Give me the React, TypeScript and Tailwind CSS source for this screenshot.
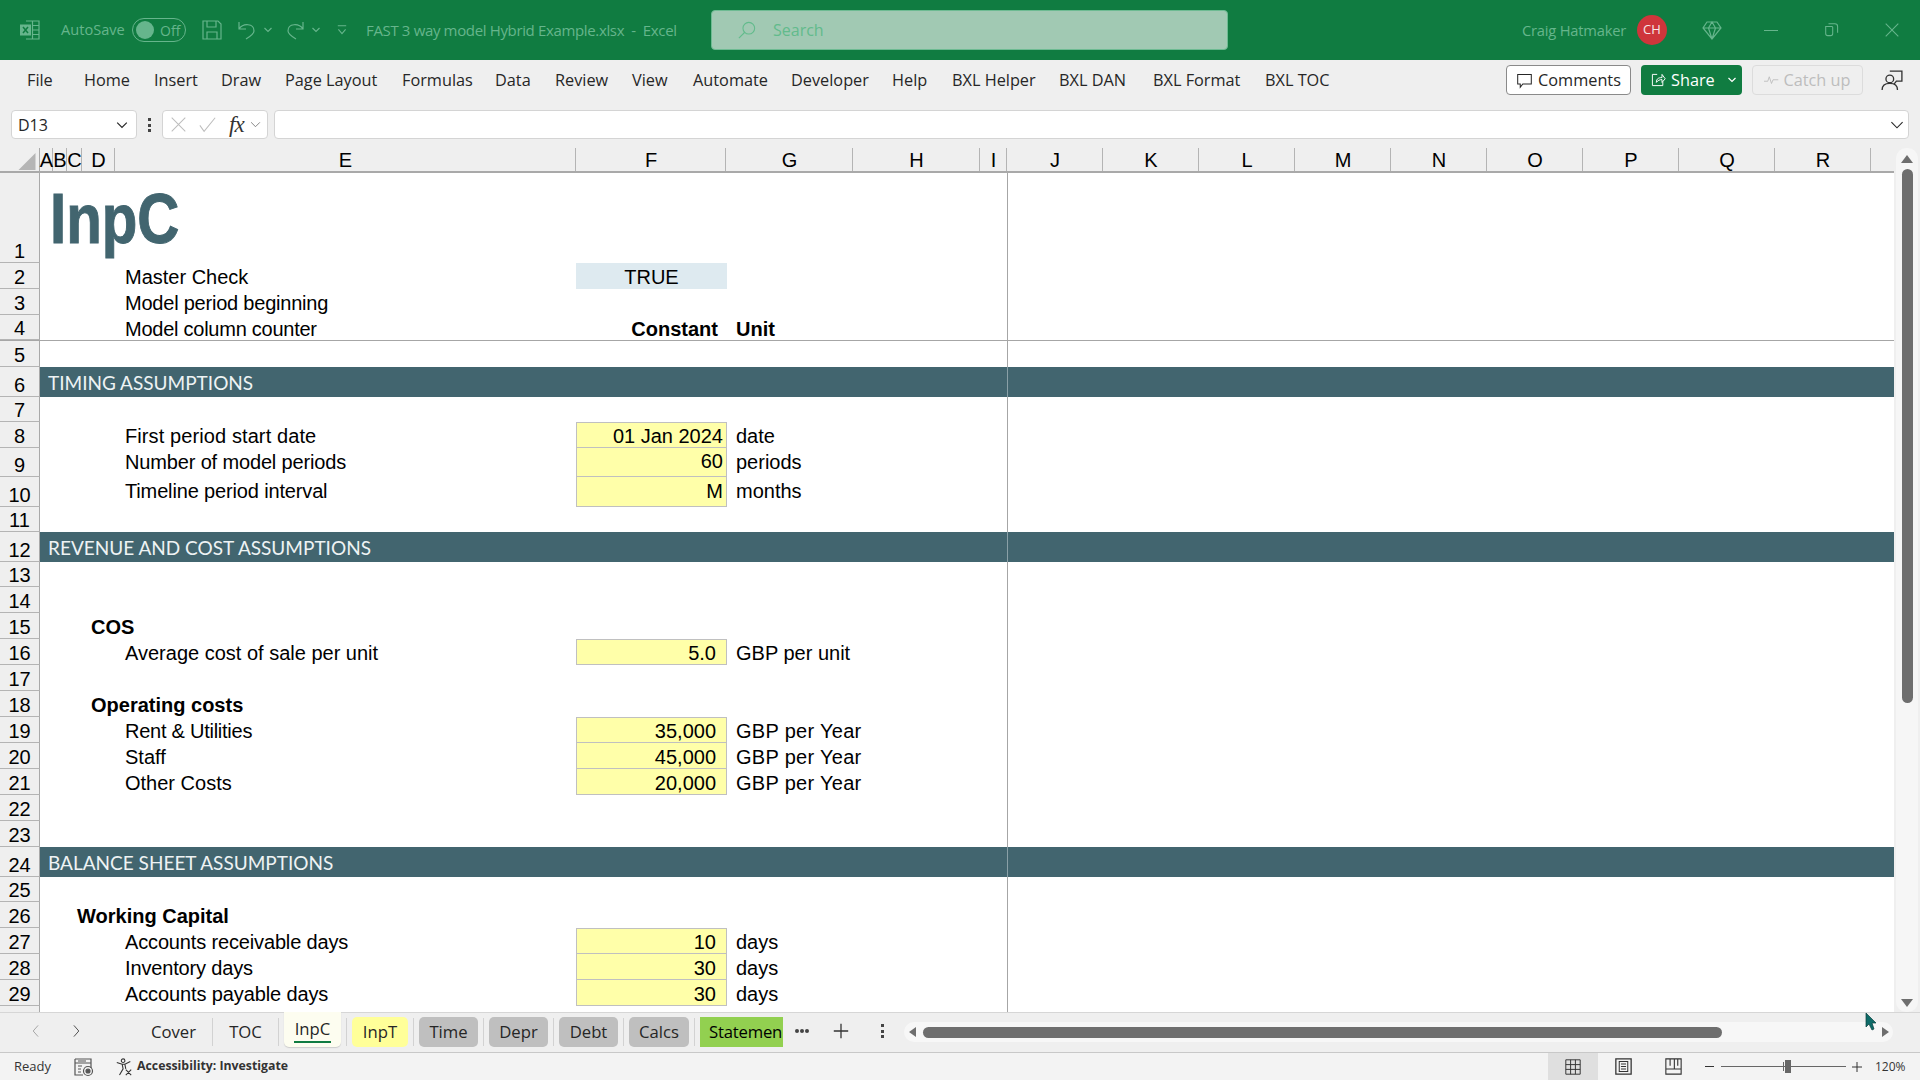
import type { ReactNode } from 'react'

type SheetRow = {
  n: number
  h: string
  label?: string
  indent?: string
  track?: string
  bold?: boolean
  value?: string
  unit?: string
  unitTrack?: string
  kind?: 'input' | 'acct' | 'check' | 'head'
  first?: boolean
  tall?: boolean
  band?: string
  line?: boolean
}

const ribbonTabs = [
  { name: 'File', w: 'w-[57px]' },
  { name: 'Home', w: 'w-[70px]' },
  { name: 'Insert', w: 'w-[67px]' },
  { name: 'Draw', w: 'w-[64px]' },
  { name: 'Page Layout', w: 'w-[117px]' },
  { name: 'Formulas', w: 'w-[93px]' },
  { name: 'Data', w: 'w-[60px]' },
  { name: 'Review', w: 'w-[77px]' },
  { name: 'View', w: 'w-[61px]' },
  { name: 'Automate', w: 'w-[98px]' },
  { name: 'Developer', w: 'w-[101px]' },
  { name: 'Help', w: 'w-[60px]' },
  { name: 'BXL Helper', w: 'w-[107px]' },
  { name: 'BXL DAN', w: 'w-[94px]' },
  { name: 'BXL Format', w: 'w-[112px]' },
  { name: 'BXL TOC', w: 'w-[90px]' },
]

const columns = [
  { name: 'A', w: 'w-[13px]' },
  { name: 'B', w: 'w-[14px]' },
  { name: 'C', w: 'w-[15px]' },
  { name: 'D', w: 'w-[33px]' },
  { name: 'E', w: 'w-[461px]' },
  { name: 'F', w: 'w-[150px]' },
  { name: 'G', w: 'w-[127px]' },
  { name: 'H', w: 'w-[127px]' },
  { name: 'I', w: 'w-[27px]' },
  { name: 'J', w: 'w-[96px]' },
  { name: 'K', w: 'w-[96px]' },
  { name: 'L', w: 'w-[96px]' },
  { name: 'M', w: 'w-[96px]' },
  { name: 'N', w: 'w-[96px]' },
  { name: 'O', w: 'w-[96px]' },
  { name: 'P', w: 'w-[96px]' },
  { name: 'Q', w: 'w-[96px]' },
  { name: 'R', w: 'w-[96px]' },
]

const E = 'pl-[85px]'
const D = 'pl-[51px]'
const C = 'pl-[37px]'
const YEAR = 'tracking-[0.3px]'

const rows: SheetRow[] = [
  { n: 1, h: 'h-[90px]' },
  { n: 2, h: 'h-[26px]', label: 'Master Check', indent: E, value: 'TRUE', kind: 'check' },
  { n: 3, h: 'h-[26px]', label: 'Model period beginning', indent: E, track: 'tracking-[-0.22px]' },
  { n: 4, h: 'h-[26px]', label: 'Model column counter', indent: E, track: 'tracking-[-0.25px]', value: 'Constant', kind: 'head', unit: 'Unit', line: true },
  { n: 5, h: 'h-[26px]' },
  { n: 6, h: 'h-[30px]', band: 'TIMING ASSUMPTIONS' },
  { n: 7, h: 'h-[25px]' },
  { n: 8, h: 'h-[26px]', label: 'First period start date', indent: E, track: 'tracking-[0.1px]', value: '01 Jan 2024', kind: 'input', unit: 'date', first: true },
  { n: 9, h: 'h-[29px]', label: 'Number of model periods', indent: E, track: 'tracking-[-0.15px]', value: '60', kind: 'input', unit: 'periods', tall: true },
  { n: 10, h: 'h-[30px]', label: 'Timeline period interval', indent: E, track: 'tracking-[-0.15px]', value: 'M', kind: 'input', unit: 'months', tall: true },
  { n: 11, h: 'h-[25px]' },
  { n: 12, h: 'h-[30px]', band: 'REVENUE AND COST ASSUMPTIONS' },
  { n: 13, h: 'h-[25px]' },
  { n: 14, h: 'h-[26px]' },
  { n: 15, h: 'h-[26px]', label: 'COS', indent: D, bold: true },
  { n: 16, h: 'h-[26px]', label: 'Average cost of sale per unit', indent: E, value: '5.0', kind: 'acct', unit: 'GBP per unit', first: true },
  { n: 17, h: 'h-[26px]' },
  { n: 18, h: 'h-[26px]', label: 'Operating costs', indent: D, bold: true },
  { n: 19, h: 'h-[26px]', label: 'Rent & Utilities', indent: E, track: 'tracking-[-0.25px]', value: '35,000', kind: 'acct', unit: 'GBP per Year', unitTrack: YEAR, first: true },
  { n: 20, h: 'h-[26px]', label: 'Staff', indent: E, value: '45,000', kind: 'acct', unit: 'GBP per Year', unitTrack: YEAR },
  { n: 21, h: 'h-[26px]', label: 'Other Costs', indent: E, value: '20,000', kind: 'acct', unit: 'GBP per Year', unitTrack: YEAR },
  { n: 22, h: 'h-[26px]' },
  { n: 23, h: 'h-[26px]' },
  { n: 24, h: 'h-[30px]', band: 'BALANCE SHEET ASSUMPTIONS' },
  { n: 25, h: 'h-[25px]' },
  { n: 26, h: 'h-[26px]', label: 'Working Capital', indent: C, bold: true },
  { n: 27, h: 'h-[26px]', label: 'Accounts receivable days', indent: E, track: 'tracking-[-0.15px]', value: '10', kind: 'acct', unit: 'days', first: true },
  { n: 28, h: 'h-[26px]', label: 'Inventory days', indent: E, track: 'tracking-[-0.15px]', value: '30', kind: 'acct', unit: 'days' },
  { n: 29, h: 'h-[26px]', label: 'Accounts payable days', indent: E, track: 'tracking-[-0.12px]', value: '30', kind: 'acct', unit: 'days' },
]

const sheetTabs = [
  { name: 'Cover', cls: 'w-[67px]' },
  { name: 'TOC', cls: 'w-[55px]' },
  { name: 'InpC', cls: 'w-[57px]', active: true },
  { name: 'InpT', cls: 'w-[56px] bg-[#ffff99] rounded-[5px]' },
  { name: 'Time', cls: 'w-[59px] bg-[#bfbfbf] rounded-[5px]' },
  { name: 'Depr', cls: 'w-[59px] bg-[#bfbfbf] rounded-[5px]' },
  { name: 'Debt', cls: 'w-[59px] bg-[#bfbfbf] rounded-[5px]' },
  { name: 'Calcs', cls: 'w-[60px] bg-[#bfbfbf] rounded-[5px]' },
]

function Icon({ className, children, fill = 'none' }: { className: string; children: ReactNode; fill?: string }) {
  return (
    <svg viewBox="0 0 20 20" fill={fill} stroke="currentColor" strokeWidth="1.2" className={className}>
      {children}
    </svg>
  )
}

function TitleBar() {
  return (
    <div className="flex h-[60px] shrink-0 items-center bg-[#107c41] text-[16px] text-[#66b58c]">
      <Icon className="ml-[20px] h-[20px] w-[20px]">
        <path d="M6 1h13v18H6M12.5 1v18M12.5 5.5H19M12.5 10H19M12.5 14.5H19" />
        <rect x="0" y="4.5" width="11" height="11" fill="currentColor" stroke="none" />
        <path d="M3 7l5 6M8 7l-5 6" stroke="#107c41" strokeWidth="1.5" />
      </Icon>
      <span className="ml-[21px] w-[71px] whitespace-nowrap text-[14.6px]">AutoSave</span>
      <div className="flex h-[24px] w-[54px] items-center rounded-full border border-[#66b58c]">
        <span className="ml-[3px] h-[18px] w-[18px] rounded-full bg-[#66b58c]" />
        <span className="ml-[6px] text-[14px]">Off</span>
      </div>
      <Icon className="ml-[16px] h-[20px] w-[20px]">
        <path d="M1 1h15l3 3v15H1zM5 1v6h9V1M5 19v-7h10v7" />
      </Icon>
      <Icon className="ml-[15px] h-[20px] w-[20px]">
        <path d="M2 2v7h7M2 9c4-6 15-6 15 2 0 3-3 5-8 8" />
      </Icon>
      <Icon className="ml-[6px] h-[10px] w-[10px]">
        <path d="M3 6l7 7 7-7" strokeWidth="2.4" />
      </Icon>
      <Icon className="ml-[12px] h-[20px] w-[20px]">
        <path d="M18 2v7h-7M18 9C14 3 3 3 3 11c0 3 3 5 8 8" />
      </Icon>
      <Icon className="ml-[6px] h-[10px] w-[10px]">
        <path d="M3 6l7 7 7-7" strokeWidth="2.4" />
      </Icon>
      <Icon className="ml-[15px] h-[12px] w-[12px]">
        <path d="M3 3h14M4 9l6 7 6-7" strokeWidth="1.8" />
      </Icon>
      <span className="ml-[18px] w-[345px] whitespace-nowrap text-[15px] tracking-[-0.35px]">FAST 3 way model Hybrid Example.xlsx{'\u00a0\u00a0-\u00a0\u00a0'}Excel</span>
      <div className="flex h-[40px] w-[517px] items-center rounded-[4px] border border-[#6dbb92] bg-[#a1c9b3] text-[#62bb8c]">
        <Icon className="ml-[26px] h-[18px] w-[18px]">
          <circle cx="12" cy="8" r="6.5" />
          <path d="M7.5 12.5L1 19" />
        </Icon>
        <span className="ml-[17px]">Search</span>
      </div>
      <span className="ml-[294px] w-[104px] whitespace-nowrap text-[14.7px] tracking-[-0.2px]">Craig Hatmaker</span>
      <div className="ml-[11px] flex h-[30px] w-[30px] items-center justify-center rounded-full bg-[#cf353b] text-[13px] text-[#f6e7e7]">CH</div>
      <Icon className="ml-[35px] h-[20px] w-[20px]">
        <path d="M5 2h10l4 6-9 11L1 8zM1 8h18M6.5 8L10 19l3.5-11L10 2 6.5 8" />
      </Icon>
      <span className="ml-[42px] h-px w-[14px] bg-current" />
      <Icon className="ml-[47px] h-[14px] w-[14px]">
        <path d="M1 5h9a1.5 1.5 0 011 1v9a3 3 0 01-3 3H4a3 3 0 01-3-3zM5 1h9a4 4 0 014 4v9" strokeWidth="1.5" />
      </Icon>
      <Icon className="ml-[46px] h-[14px] w-[14px]">
        <path d="M1 1l18 18M19 1L1 19" strokeWidth="1.5" />
      </Icon>
    </div>
  )
}

function Ribbon() {
  return (
    <div className="flex h-[45px] shrink-0 items-center pb-[5px] text-[16.3px] text-[#262626]">
      <div className="flex pl-[27px]">
        {ribbonTabs.map(t => (
          <span key={t.name} className={`${t.w} whitespace-nowrap`}>{t.name}</span>
        ))}
      </div>
      <div className="ml-[151px] flex h-[30px] w-[125px] items-center justify-center gap-[5px] rounded-[4px] border border-[#8a8a8a] bg-white">
        <Icon className="h-[17px] w-[17px]">
          <path d="M2 3h16v11H8l-3 4v-4H2z" />
        </Icon>
        <span>Comments</span>
      </div>
      <div className="ml-[10px] flex h-[30px] w-[101px] items-center rounded-[4px] bg-[#107c41] text-white">
        <Icon className="ml-[9px] h-[16px] w-[16px]">
          <path d="M9 3H3v14h13v-5M8 13c0-5 3-6 7-6V3l4 5.500-4 4.500V9.500c-3 0-5 1-7 3.500z" />
        </Icon>
        <span className="ml-[5px]">Share</span>
        <Icon className="ml-[12px] h-[10px] w-[10px]">
          <path d="M3 6l7 7 7-7" strokeWidth="2.4" />
        </Icon>
      </div>
      <div className="ml-[10px] flex h-[30px] w-[111px] items-center justify-center gap-[4px] rounded-[4px] border border-[#dcdcdc] text-[#bdbdbd]">
        <Icon className="h-[15px] w-[15px]">
          <path d="M0 11h5l2-6 3 9 2-5h7" />
        </Icon>
        <span>Catch up</span>
      </div>
      <Icon className="ml-[18px] h-[22px] w-[22px] text-[#333]">
        <circle cx="8" cy="9" r="3.500" />
        <path d="M1 19c0-4 3-6 7-6s7 2 7 6M8 2h11v9h-5l-2 2.500" />
      </Icon>
    </div>
  )
}

function FormulaBar() {
  return (
    <div className="flex h-[43px] shrink-0 items-start pt-[5px] text-[#262626]">
      <div className="ml-[11px] flex h-[29px] w-[126px] items-center justify-between rounded-[4px] border border-[#d4d4d4] bg-white pl-[6px] pr-[8px] text-[16px]">
        <span>D13</span>
        <Icon className="h-[12px] w-[12px]">
          <path d="M2 6l8 8 8-8" strokeWidth="2" />
        </Icon>
      </div>
      <div className="ml-[11px] mt-[8px] flex h-[14px] w-[4px] flex-col justify-between">
        <span className="h-[3px] w-[3px] bg-[#444]" />
        <span className="h-[3px] w-[3px] bg-[#444]" />
        <span className="h-[3px] w-[3px] bg-[#444]" />
      </div>
      <div className="ml-[10px] flex h-[29px] w-[106px] items-center rounded-[4px] border border-[#d4d4d4] bg-white">
        <Icon className="ml-[7px] h-[17px] w-[17px] text-[#bdbdbd]">
          <path d="M2 2l16 16M18 2L2 18" />
        </Icon>
        <Icon className="ml-[12px] h-[17px] w-[17px] text-[#bdbdbd]">
          <path d="M1 11l5 7L19 2" />
        </Icon>
        <span className="ml-[13px] font-['Liberation_Serif',serif] text-[23px] italic leading-none tracking-[-1px] text-[#333]">fx</span>
        <Icon className="ml-[6px] h-[11px] w-[11px] text-[#777]">
          <path d="M2 6l8 8 8-8" strokeWidth="1.6" />
        </Icon>
      </div>
      <div className="ml-[6px] flex h-[29px] w-[1635px] items-center justify-end rounded-[4px] border border-[#d4d4d4] bg-white pr-[4px]">
        <Icon className="h-[14px] w-[14px]">
          <path d="M2 6l8 8 8-8" strokeWidth="1.6" />
        </Icon>
      </div>
    </div>
  )
}

function ColumnHeader() {
  return (
    <div className="flex h-[25px] shrink-0 border-b-2 border-[#a9a9a9] text-[20px] text-black">
      <div className="flex w-[40px] items-end justify-end border-r border-[#a9a9a9] pb-[1px] pr-[3px]">
        <svg viewBox="0 0 18 18" className="h-[17px] w-[18px]">
          <polygon points="18,0 18,18 0,18" fill="#b5b5b5" />
        </svg>
      </div>
      {columns.map(c => (
        <div key={c.name} className={`${c.w} flex shrink-0 items-center justify-center border-r border-[#b4b4b4] pl-[1px] leading-none`}>
          {c.name}
        </div>
      ))}
    </div>
  )
}

function ValueCell({ row, nudge }: { row: SheetRow; nudge: string }) {
  const base = `flex w-[151px] shrink-0 items-center ${nudge}`
  if (row.kind === 'check') {
    return <div className={`${base} justify-center bg-[#deeaf0]`}>{row.value}</div>
  }
  if (row.kind === 'head') {
    return <div className={`${base} justify-end pr-[9px] font-bold`}>{row.value}</div>
  }
  if (row.kind === 'input' || row.kind === 'acct') {
    return (
      <div className={`${base} justify-end border-x border-b border-[#c0c0c0] bg-[#ffffa9] ${row.first ? 'border-t' : ''} ${row.kind === 'acct' ? 'pr-[10px]' : 'pr-[3px]'}`}>
        {row.value}
      </div>
    )
  }
  return <div className="w-[151px] shrink-0" />
}

function Row({ row }: { row: SheetRow }) {
  const nudge = row.tall ? 'pb-[2px]' : 'pt-[2px]'
  return (
    <div className={`${row.h} flex shrink-0 text-[20px] leading-[24px] text-black ${row.line ? 'border-b border-[#a6a6a6]' : ''}`}>
      <div className="flex w-[40px] shrink-0 items-end justify-center border-r border-b border-r-[#a9a9a9] border-b-[#b4b4b4] bg-[#efefef] leading-[22px]">
        {row.n}
      </div>
      {row.band ? (
        <>
          <div className="flex w-[968px] shrink-0 items-center border-r border-[#8aa0a7] bg-[#42656f] pl-[8px] pt-[2px] font-['Lato',sans-serif] text-[19px] text-[#eef3f4]">
            {row.band}
          </div>
          <div className="flex-1 bg-[#42656f]" />
        </>
      ) : (
        <>
          <div className="flex w-[968px] shrink-0 border-r border-[#a6a6a6] bg-white">
            {row.n === 1 ? (
              <span className="ml-[10px] mt-[6px] origin-left scale-x-[0.82] whitespace-nowrap text-[71px] font-bold leading-[80px] text-[#42656f] [-webkit-text-stroke:1px_#42656f]">InpC</span>
            ) : (
              <>
                <div className={`flex w-[536px] shrink-0 items-center whitespace-nowrap ${nudge} ${row.indent ?? ''} ${row.track ?? ''} ${row.bold ? 'font-bold' : ''}`}>
                  {row.label}
                </div>
                <ValueCell row={row} nudge={nudge} />
                <div className={`flex items-center whitespace-nowrap pl-[9px] ${nudge} ${row.unitTrack ?? ''} ${row.kind === 'head' ? 'font-bold' : ''}`}>{row.unit}</div>
              </>
            )}
          </div>
          <div className="flex-1 bg-white" />
        </>
      )}
    </div>
  )
}

function VerticalScroll() {
  return (
    <div className="flex w-[26px] shrink-0 justify-center">
      <div className="relative flex w-[22px] flex-col items-center rounded-[10px] bg-[#f6f6f6] pt-[7px]">
        <div className="h-0 w-0 border-x-[6px] border-b-[8px] border-x-transparent border-b-[#6e6e6e]" />
        <div className="mt-[6px] h-[534px] w-[11px] rounded-t-[6px] rounded-b-[6px] bg-[#6e6e6e]" />
        <div className="mb-[5px] mt-auto h-0 w-0 border-x-[6px] border-t-[8px] border-x-transparent border-t-[#6e6e6e]" />
      </div>
    </div>
  )
}

function Sep() {
  return <span className="mx-[5px] mt-[1px] h-[28px] w-px shrink-0 bg-[#d2d2d2]" />
}

function TabBar() {
  return (
    <div className="flex h-[40px] shrink-0 border-t border-[#d6d6d6] bg-[#efefef] text-[16.7px] text-[#262626]">
      <div className="flex w-[140px] shrink-0 items-center pb-[3px] pl-[29px]">
        <Icon className="h-[14px] w-[14px] text-[#999]">
          <path d="M13 2l-7 8 7 8" />
        </Icon>
        <Icon className="ml-[26px] h-[14px] w-[14px] text-[#333]">
          <path d="M7 2l7 8-7 8" />
        </Icon>
      </div>
      <div className="flex pt-[4px]">
        {sheetTabs.map(t =>
          t.active ? (
            <div key={t.name} className="flex shrink-0">
              <div className="-mt-[5px] flex h-[35px] w-[57px] flex-col items-center rounded-b-[5px] bg-[#fdfdf0] pt-[6px] font-medium shadow-[0_1px_1px_#cccccc]">
                <span className="leading-[21px]">{t.name}</span>
                <span className="mt-[2px] h-[2px] w-[37px] bg-[#107c41]" />
              </div>
              <Sep />
            </div>
          ) : (
            <div key={t.name} className="flex shrink-0">
              <div className={`${t.cls} flex h-[30px] items-center justify-center`}>{t.name}</div>
              <Sep />
            </div>
          ),
        )}
        <div className="flex h-[30px] w-[83px] shrink-0 items-center whitespace-nowrap bg-[#92d050] pl-[9px] tracking-[-0.2px] text-black">Statemen</div>
      </div>
      <div className="ml-[12px] flex items-center pb-[3px]">
        <span className="h-[4px] w-[4px] rounded-full bg-[#444]" />
        <span className="ml-[1px] h-[4px] w-[4px] rounded-full bg-[#444]" />
        <span className="ml-[1px] h-[4px] w-[4px] rounded-full bg-[#444]" />
        <Icon className="ml-[24px] h-[16px] w-[16px] text-[#333]">
          <path d="M10 1v18M1 10h18" strokeWidth="1.6" />
        </Icon>
        <div className="ml-[32px] flex h-[14px] w-[3px] flex-col justify-between">
          <span className="h-[3px] w-[3px] bg-[#444]" />
          <span className="h-[3px] w-[3px] bg-[#444]" />
          <span className="h-[3px] w-[3px] bg-[#444]" />
        </div>
      </div>
      <div className="ml-[20px] mt-[9px] flex h-[20px] w-[989px] items-center rounded-full bg-[#f7f7f7] pl-[2px]">
        <span className="ml-[3px] h-0 w-0 border-y-[5px] border-r-[7px] border-y-transparent border-r-[#6e6e6e]" />
        <span className="ml-[7px] h-[11px] w-[799px] rounded-full bg-[#6e6e6e]" />
        <span className="ml-[160px] h-0 w-0 border-y-[5px] border-l-[7px] border-y-transparent border-l-[#6e6e6e]" />
      </div>
    </div>
  )
}

function StatusBar() {
  return (
    <div className="flex h-[28px] shrink-0 items-center border-t border-[#c8c8c8] bg-[#f3f3f3] text-[13px] text-[#333]">
      <span className="ml-[14px] w-[60px]">Ready</span>
      <Icon className="h-[20px] w-[20px] text-[#555]">
        <path d="M1 2h16v9M1 2v16h8M1 6h16M4 4h8M4 9h4M4 12h3M4 15h3" />
        <circle cx="14" cy="14" r="4.500" />
        <circle cx="14" cy="14" r="2" fill="currentColor" />
      </Icon>
      <Icon className="ml-[21px] h-[18px] w-[18px]">
        <circle cx="9" cy="3" r="2" />
        <path d="M2 5l6 2h3l6-3M8 7l1 5-4 7M11 7l1 5M12 13l6 6M18 13l-6 6" />
      </Icon>
      <span className="ml-[4px] w-[153px] whitespace-nowrap text-[12.3px] font-bold">Accessibility: Investigate</span>
      <div className="ml-[1258px] flex h-full w-[50px] items-center justify-center bg-[#dfdfdf]">
        <Icon className="h-[16px] w-[16px]">
          <path d="M1 1h18v18H1zM7 1v18M13 1v18M1 7h18M1 13h18" />
        </Icon>
      </div>
      <Icon className="ml-[17px] h-[17px] w-[17px]">
        <path d="M1 1h18v18H1z" strokeWidth="1.5" />
        <path d="M5 4h10v12H5zM7 7h6M7 10h6M7 13h6" />
      </Icon>
      <Icon className="ml-[33px] h-[17px] w-[17px]">
        <path d="M1 1h18v18H1zM1 13h10V1M6 1v8M11 13h8M15 1v8" strokeWidth="1.3" />
      </Icon>
      <span className="ml-[23px] h-px w-[9px] bg-[#333]" />
      <div className="relative ml-[7px] h-px w-[125px] bg-[#666]">
        <span className="absolute left-[62px] top-[-4px] h-[9px] w-px bg-[#666]" />
        <span className="absolute left-[64px] top-[-6px] h-[13px] w-[6px] bg-[#666]" />
      </div>
      <Icon className="ml-[6px] h-[10px] w-[10px]">
        <path d="M10 0v20M0 10h20" strokeWidth="2" />
      </Icon>
      <span className="ml-[13px] text-[12px]">120%</span>
    </div>
  )
}

export default function App() {
  return (
    <div className="relative flex h-[1080px] w-[1920px] flex-col overflow-hidden bg-[#efefef] font-['Open_Sans',sans-serif]">
      <TitleBar />
      <Ribbon />
      <FormulaBar />
      <div className="flex h-[864px] shrink-0 font-['Liberation_Sans',Arial,sans-serif]">
        <div className="flex w-[1894px] shrink-0 flex-col overflow-hidden">
          <ColumnHeader />
          {rows.map(r => (
            <Row key={r.n} row={r} />
          ))}
          <div className="flex flex-1">
            <div className="w-[40px] border-r border-[#a9a9a9] bg-[#efefef]" />
            <div className="w-[968px] border-r border-[#a6a6a6] bg-white" />
            <div className="flex-1 bg-white" />
          </div>
        </div>
        <VerticalScroll />
      </div>
      <TabBar />
      <StatusBar />
      {/* stray mouse pointer in the capture */}
      <svg viewBox="0 0 12 18" className="absolute left-[1865px] top-[1013px] h-[18px] w-[12px]">
        <polygon points="1,0 1,14 4,11 7,17 9,16 7,10 11,10" fill="#0e6b68" stroke="#083f3e" strokeWidth="0.7" />
      </svg>
    </div>
  )
}
